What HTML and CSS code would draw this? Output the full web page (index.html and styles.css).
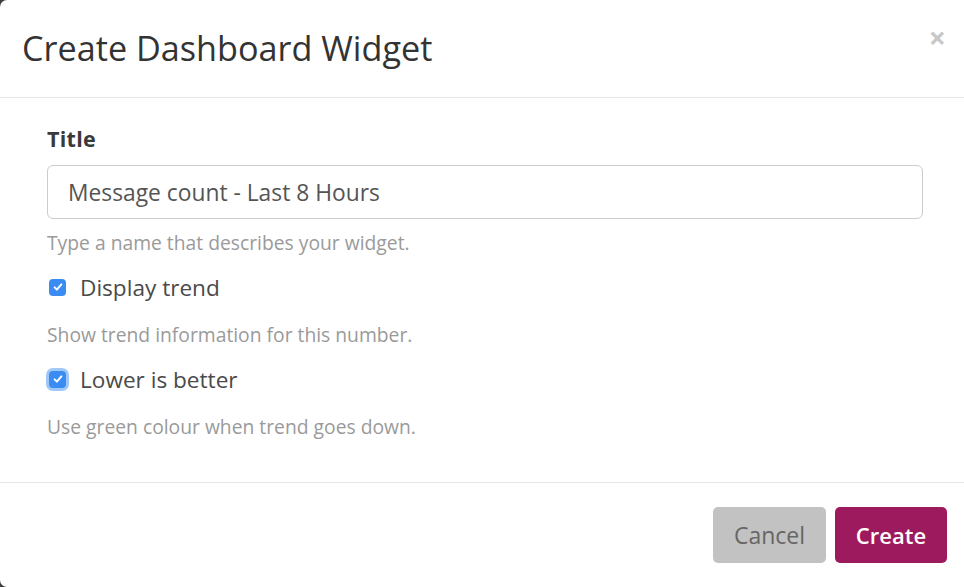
FILE: index.html
```html
<!DOCTYPE html>
<html lang="en">
<head>
<meta charset="utf-8">
<title>Create Dashboard Widget</title>
<link rel="stylesheet" href="styles.css">
</head>
<body>
<div class="modal">
  <div class="modal-header">
    <h1 class="modal-title">Create Dashboard Widget</h1>
    <span class="close">&times;</span>
  </div>
  <div class="modal-body">
    <label class="field-label">Title</label>
    <div class="input">Message count - Last 8 Hours</div>
    <p class="help help-first">Type a name that describes your widget.</p>
    <div class="check-row">
      <span class="checkbox"><svg viewBox="0 0 16 16" width="12" height="12"><path d="M3.5 8.5l3 3 6-7" fill="none" stroke="#fff" stroke-width="2.6" stroke-linecap="round" stroke-linejoin="round"/></svg></span>
      <span class="check-label">Display trend</span>
    </div>
    <p class="help">Show trend information for this number.</p>
    <div class="check-row">
      <span class="checkbox focused"><svg viewBox="0 0 16 16" width="12" height="12"><path d="M3.5 8.5l3 3 6-7" fill="none" stroke="#fff" stroke-width="2.6" stroke-linecap="round" stroke-linejoin="round"/></svg></span>
      <span class="check-label">Lower is better</span>
    </div>
    <p class="help">Use green colour when trend goes down.</p>
  </div>
  <div class="modal-footer">
    <button class="btn btn-cancel">Cancel</button>
    <button class="btn btn-create">Create</button>
  </div>
</div>
</body>
</html>
```
FILE: styles.css
```css
html, body {
  margin: 0;
  padding: 0;
  height: 100%;
  overflow: hidden;
}
body {
  background: #3c3c3c;
  font-family: "Open Sans", "Noto Sans", sans-serif;
}
.modal {
  width: 964px;
  height: 587px;
  background: #fff;
  border-radius: 7px 0 0 7px;
  display: flex;
  flex-direction: column;
}
.modal-header {
  height: 97px;
  border-bottom: 1px solid #e5e5e5;
  display: flex;
  align-items: center;
  justify-content: space-between;
  padding: 0 18px 0 22px;
  box-sizing: content-box;
}
.modal-title {
  margin: 0;
  font-size: 34.2px;
  font-weight: 400;
  color: #333;
  line-height: 40px;
  margin-top: -2px;
}
.close {
  font-size: 30px;
  font-weight: 700;
  color: #c8c8c8;
  line-height: 30px;
  margin-top: -22px;
}
.modal-body {
  flex: 1;
  padding: 26px 41px 0 47px;
}
.field-label {
  display: block;
  font-size: 21.5px;
  font-weight: 700;
  color: #3a3a3a;
  line-height: 30px;
  letter-spacing: 0.3px;
}
.input {
  margin-top: 11px;
  height: 54px;
  box-sizing: border-box;
  border: 1px solid #cccccc;
  border-radius: 6px;
  padding: 0 20px;
  display: flex;
  align-items: center;
  font-size: 22.8px;
  color: #555;
}
.help {
  margin: 20px 0 0;
  font-size: 19.3px;
  line-height: 26px;
  color: #9a9a9a;
}
.help.help-first {
  margin-top: 11px;
}
.check-row {
  margin-top: 16px;
  display: flex;
  align-items: center;
  height: 30px;
}
.checkbox {
  width: 17px;
  height: 17px;
  margin-left: 2px;
  border-radius: 4px;
  background: #3b8cf2;
  display: flex;
  align-items: center;
  justify-content: center;
}
.checkbox.focused {
  box-shadow: 0 0 0 3px rgba(66, 146, 240, 0.5);
}
.check-label {
  margin-left: 14px;
  font-size: 22.6px;
  color: #4a4a4a;
}
.modal-footer {
  border-top: 1px solid #e5e5e5;
  height: 105px;
  box-sizing: border-box;
  display: flex;
  justify-content: flex-end;
  align-items: flex-start;
  padding: 24px 17px 0 0;
  gap: 9px;
}
.btn {
  height: 56px;
  border: none;
  border-radius: 5px;
  font-family: "Open Sans", "Noto Sans", sans-serif;
  font-size: 22px;
  padding: 0;
}
.btn-cancel {
  width: 113px;
  background: #c2c2c2;
  color: #666;
  font-size: 23px;
}
.btn-create {
  width: 112px;
  background: #9d1a5e;
  color: #fff;
  font-weight: 600;
}
```
